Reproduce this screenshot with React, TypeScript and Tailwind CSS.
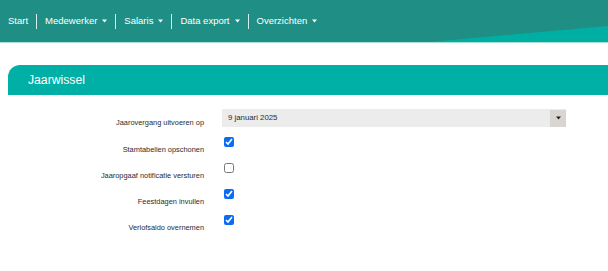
import { useState } from 'react'

const menu = [
  { label: 'Start', caret: false },
  { label: 'Medewerker', caret: true },
  { label: 'Salaris', caret: true },
  { label: 'Data export', caret: true },
  { label: 'Overzichten', caret: true },
]

const opties = [
  { id: 'stamtabellen', label: 'Stamtabellen opschonen', checked: true },
  { id: 'jaaropgaaf', label: 'Jaaropgaaf notificatie versturen', checked: false },
  { id: 'feestdagen', label: 'Feestdagen invullen', checked: true },
  { id: 'verlof', label: 'Verlofsaldo overnemen', checked: true },
]

function Caret({ className = '' }: { className?: string }) {
  return (
    <svg width="5" height="4" viewBox="0 0 5 4" className={className}>
      <path d="M0 0.5 L5 0.5 L2.5 3.5 Z" fill="currentColor" />
    </svg>
  )
}

export default function App() {
  const [values, setValues] = useState<Record<string, boolean>>(
    Object.fromEntries(opties.map((o) => [o.id, o.checked]))
  )

  return (
    <div className="w-[608px] h-[271px] bg-white overflow-hidden font-['Liberation_Sans',Arial,sans-serif]">
      {/* Top navigation */}
      <nav className="relative h-[42px] bg-[#1f8f85] flex items-center pl-[8px] text-white text-[9.5px]">
        <svg className="absolute inset-0 w-full h-full" viewBox="0 0 608 42" preserveAspectRatio="none">
          <polygon points="430,42 608,26 608,42" fill="#00afa4" />
        </svg>
        {menu.map((item, i) => (
          <div key={item.label} className="relative flex items-center">
            {i > 0 && <span className="w-px h-[15px] bg-[#d6efec] mx-[8px]" />}
            <span className="leading-none">{item.label}</span>
            {item.caret && <Caret className="ml-[5px] text-white" />}
          </div>
        ))}
      </nav>
      <div className="h-px bg-[#a9ddd8]" />

      {/* Panel */}
      <div className="mt-[22px] ml-[8px]">
        <div className="h-[30px] bg-[#00b0a6] rounded-tl-[12px] flex items-center pl-[20px]">
          <h1 className="text-white text-[12.2px] leading-none">Jaarwissel</h1>
        </div>

        <div className="pt-[14px] text-[#2b2b2b] text-[7.4px]">
          <div className="flex items-start h-[28px]">
            <div className="w-[196px] text-right pt-[8.5px] leading-[9px]">Jaarovergang uitvoeren op</div>
            <div className="ml-[18px] w-[344px] h-[18px] bg-[#ececec] flex items-center justify-between">
              <span className="pl-[6px] text-[7.8px] leading-none">9 januari 2025</span>
              <span className="w-[16px] h-[17px] bg-[#d9d5d1] flex items-center justify-center">
                <Caret className="text-[#222]" />
              </span>
            </div>
          </div>

          {opties.map((o) => (
            <div key={o.id} className="flex items-start h-[26px]">
              <label htmlFor={o.id} className="w-[196px] text-right pt-[7.5px] leading-[9px]">
                {o.label}
              </label>
              <input
                id={o.id}
                type="checkbox"
                checked={values[o.id]}
                onChange={() => setValues((v) => ({ ...v, [o.id]: !v[o.id] }))}
                className="ml-[20px] w-[10px] h-[10px] accent-[#0b6cf2]"
              />
            </div>
          ))}
        </div>
      </div>
    </div>
  )
}
